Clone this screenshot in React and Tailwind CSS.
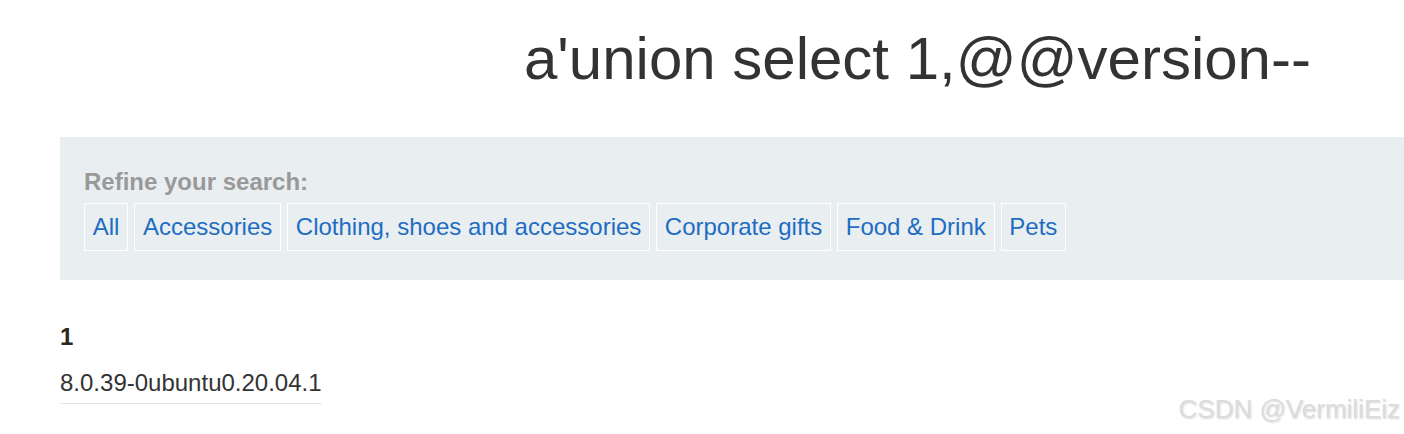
import React from 'react';

const categories = [
  'All',
  'Accessories',
  'Clothing, shoes and accessories',
  'Corporate gifts',
  'Food & Drink',
  'Pets',
];

export default function App() {
  return (
    <div className="relative h-[434px] w-[1404px] overflow-hidden bg-white font-['Liberation_Sans',Arial,sans-serif] text-[#333]">
      <div className="pl-[60px]">
        <h1 className="mt-[29px] pl-[464px] text-[60px] leading-[60px] font-normal whitespace-nowrap">
          a'union select 1,@@version--
        </h1>

        <section className="mt-[48px] bg-[#e9eef1] pl-[24px] pt-[33px] pb-[29px]">
          <div className="text-[24px] leading-[24px] font-bold text-[#999]">Refine your search:</div>
          <div className="mt-[9px] flex gap-[6px]">
            {categories.map((name) => (
              <a
                key={name}
                href="#"
                className="border border-white px-[7.75px] py-[11px] text-[24px] leading-[24px] text-[#1f6dc2] whitespace-nowrap"
              >
                {name}
              </a>
            ))}
          </div>
        </section>

        <table className="mt-[45px] border-collapse">
          <tbody>
            <tr>
              <th className="p-0 text-left text-[24px] leading-[24px] font-bold text-[#2e2620]">1</th>
            </tr>
            <tr>
              <td className="p-0 pt-[22px] pb-[8px] border-b border-[#e4e4e4] text-[24px] leading-[24px] text-[#333]">
                8.0.39-0ubuntu0.20.04.1
              </td>
            </tr>
          </tbody>
        </table>
      </div>

      <div className="absolute right-[4px] bottom-[12px] text-[26px] leading-[26px] text-[#dcdcdc] [text-shadow:1px_1px_2px_rgba(0,0,0,0.15)] whitespace-nowrap">
        CSDN @VermiliEiz
      </div>
    </div>
  );
}
